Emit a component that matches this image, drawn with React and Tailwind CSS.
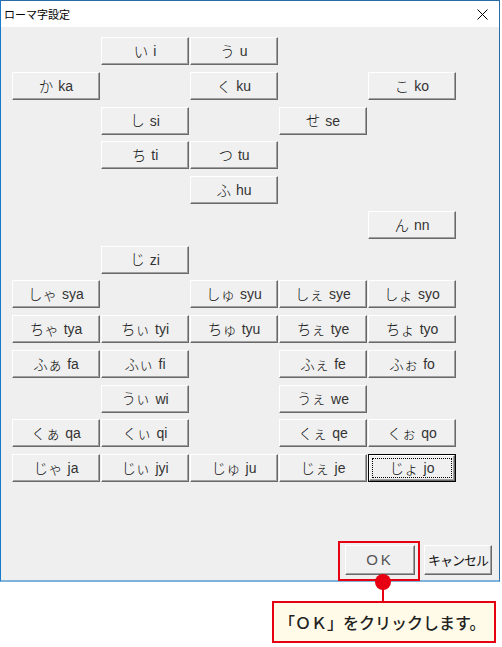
import React from 'react'

const FONT = { fontFamily: '"Noto Sans CJK JP", "Noto Sans", sans-serif' }

const rows = [
  [null, 'い i', 'う u', null, null],
  ['か ka', null, 'く ku', null, 'こ ko'],
  [null, 'し si', null, 'せ se', null],
  [null, 'ち ti', 'つ tu', null, null],
  [null, null, 'ふ hu', null, null],
  [null, null, null, null, 'ん nn'],
  [null, 'じ zi', null, null, null],
  ['しゃ sya', null, 'しゅ syu', 'しぇ sye', 'しょ syo'],
  ['ちゃ tya', 'ちぃ tyi', 'ちゅ tyu', 'ちぇ tye', 'ちょ tyo'],
  ['ふぁ fa', 'ふぃ fi', null, 'ふぇ fe', 'ふぉ fo'],
  [null, 'うぃ wi', null, 'うぇ we', null],
  ['くぁ qa', 'くぃ qi', null, 'くぇ qe', 'くぉ qo'],
  ['じゃ ja', 'じぃ jyi', 'じゅ ju', 'じぇ je', 'じょ jo'],
]

const Label = ({ label }) => {
  const [kana, roma] = label.split(' ')
  return (
    <span className="flex items-center gap-[5px] text-[14.5px] text-[#111] leading-none whitespace-nowrap">
      <span className="font-light">{kana}</span>
      <span className="font-['Liberation_Sans'] text-[14px] text-[#333]">{roma}</span>
    </span>
  )
}

const face = 'bg-[#f0f0f0] border border-t-white border-l-white border-r-[#696969] border-b-[#696969] shadow-[inset_-1px_-1px_0_#a0a0a0]'

const Btn = ({ children, focused, className = '' }) => {
  if (focused) {
    return (
      <div className={`border border-black ${className}`}>
        <div className={`w-full h-full ${face} p-[2px]`}>
          <div className="w-full h-full border border-dotted border-black flex items-center justify-center">
            {children}
          </div>
        </div>
      </div>
    )
  }
  return (
    <div className={`${face} flex items-center justify-center ${className}`}>
      {children}
    </div>
  )
}

export default function App() {
  return (
    <div className="relative w-[502px] h-[647px] bg-white" style={FONT}>
      <div className="w-[500px] h-[582px] flex flex-col border-t border-r border-t-[#2b6ca6] border-r-[#2b6ca6] border-l border-l-[#1979ca] border-b-2 border-b-[#7fb2da]">
        <div className="h-[26px] bg-white flex items-center justify-between pl-[3px] pr-[11px]">
          <span className="text-[11px] text-black">ローマ字設定</span>
          <svg width="11" height="11" viewBox="0 0 11 11">
            <path d="M0.5 0.5 L10.5 10.5 M10.5 0.5 L0.5 10.5" stroke="#000" strokeWidth="1" />
          </svg>
        </div>
        <div className="flex-1 bg-[#efefef] flex flex-col pt-[10px] pl-[11px] pr-[7px] pb-[5px]">
          <div className="grid grid-cols-[repeat(5,88px)] auto-rows-[28px] gap-x-px gap-y-[6.75px]">
            {rows.flatMap((row, r) =>
              row.map((label, c) =>
                label ? (
                  <Btn key={`${r}-${c}`} focused={label === 'じょ jo'}>
                    <Label label={label} />
                  </Btn>
                ) : (
                  <div key={`${r}-${c}`} />
                )
              )
            )}
          </div>
          <div className="flex-1" />
          <div className="flex justify-end items-end gap-[9px]">
            <Btn className="w-[70px] h-[30px]">
              <span className="text-[15px] text-[#555] tracking-[3px] font-['Liberation_Sans']">OK</span>
            </Btn>
            <Btn className="w-[68px] h-[30px]">
              <span className="text-[13px] text-[#111] tracking-[-1px] whitespace-nowrap">キャンセル</span>
            </Btn>
          </div>
        </div>
      </div>

      {/* annotation */}
      <div className="absolute left-[338px] top-[541px] w-[82px] h-[40px] border-2 border-[#e60012]" />
      <div className="absolute left-[382px] top-[585px] w-[2px] h-[17px] bg-[#e60012]" />
      <div className="absolute left-[375px] top-[574px] w-[16px] h-[16px] rounded-full bg-[#e60012]" />
      <div className="ml-[272px] mt-[19px] w-[224px] h-[42px] border-2 border-[#e60012] bg-[#fffbe8] flex items-center pl-[5px] text-[16px] font-medium text-[#222]">
        「ＯＫ」をクリックします。
      </div>
    </div>
  )
}
